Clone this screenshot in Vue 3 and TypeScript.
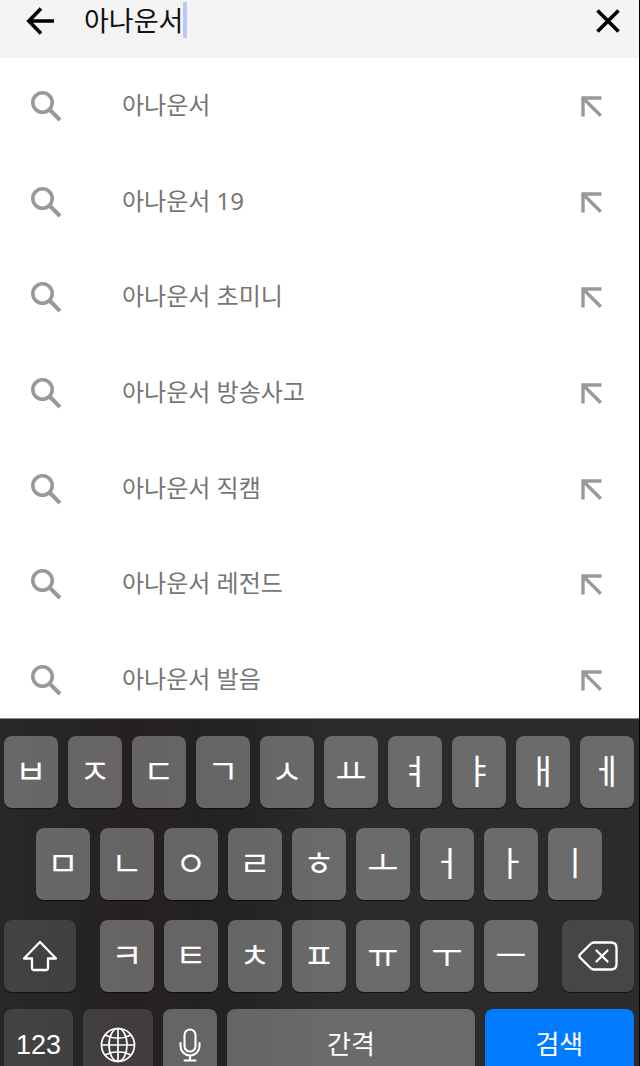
<script setup lang="ts">
import { ref } from 'vue'

const query = ref('아나운서')

const suggestions: string[] = [
  '아나운서',
  '아나운서 19',
  '아나운서 초미니',
  '아나운서 방송사고',
  '아나운서 직캠',
  '아나운서 레전드',
  '아나운서 발음',
]

const topRow: string[] = ['ㅂ', 'ㅈ', 'ㄷ', 'ㄱ', 'ㅅ', 'ㅛ', 'ㅕ', 'ㅑ', 'ㅐ', 'ㅔ']
const homeRow: string[] = ['ㅁ', 'ㄴ', 'ㅇ', 'ㄹ', 'ㅎ', 'ㅗ', 'ㅓ', 'ㅏ', 'ㅣ']
const bottomRow: string[] = ['ㅋ', 'ㅌ', 'ㅊ', 'ㅍ', 'ㅠ', 'ㅜ', 'ㅡ']
</script>

<template>
  <div class="screen">
    <header class="search-bar">
      <button class="icon-button" type="button" aria-label="뒤로">
        <svg width="28" height="28" viewBox="0 0 28 28" fill="none" stroke="#000" stroke-width="3.6">
          <path d="M28 14H3.5M15 1.5L2.8 14L15 26.5" />
        </svg>
      </button>
      <div class="field">
        <input v-model="query" class="query" type="text" size="8" aria-label="검색" />
        <span class="caret"></span>
      </div>
      <button class="icon-button" type="button" aria-label="지우기">
        <svg width="24" height="24" viewBox="0 0 24 24" fill="none" stroke="#000" stroke-width="3.6">
          <path d="M1.5 1.5L22.5 22.5M22.5 1.5L1.5 22.5" />
        </svg>
      </button>
    </header>

    <main class="results">
      <ul class="suggestions">
        <li v-for="item in suggestions" :key="item" class="suggestion">
          <svg width="32" height="32" viewBox="0 0 32 32" fill="none" stroke="#999">
            <circle cx="12.5" cy="12.5" r="9.7" stroke-width="3.6" />
            <path d="M19.5 19.5L30 30" stroke-width="4" />
          </svg>
          <a class="label" href="#">{{ item }}</a>
          <button class="icon-button" type="button" :aria-label="item + ' 입력'">
            <svg width="22" height="22" viewBox="0 0 22 22" fill="none" stroke="#999" stroke-width="3.4">
              <path d="M21.5 3H3V21.5M3 3L20.8 20.8" />
            </svg>
          </button>
        </li>
      </ul>
    </main>

    <section class="keyboard" aria-label="키보드">
      <div class="row">
        <button v-for="k in topRow" :key="k" class="key" type="button">{{ k }}</button>
      </div>
      <div class="row home">
        <button v-for="k in homeRow" :key="k" class="key" type="button">{{ k }}</button>
      </div>
      <div class="row third">
        <button class="key dark" type="button" aria-label="Shift">
          <svg width="36" height="32" viewBox="0 0 36 32" fill="none" stroke="#fff" stroke-width="2.3" stroke-linejoin="round">
            <path d="M18 2L34 18.5H26V28Q26 30 24 30H12Q10 30 10 28V18.5H2Z" />
          </svg>
        </button>
        <div class="row letters">
          <button v-for="k in bottomRow" :key="k" class="key" type="button">{{ k }}</button>
        </div>
        <button class="key dark" type="button" aria-label="삭제">
          <svg width="40" height="30" viewBox="0 0 40 30" fill="none" stroke="#fff" stroke-width="2.3" stroke-linejoin="round" stroke-linecap="round">
            <path d="M16 1.5H33Q38.5 1.5 38.5 7V23Q38.5 28.5 33 28.5H16Q14 28.5 12.5 27L2 16.5Q.8 15 2 13.5L12.5 3Q14 1.5 16 1.5Z" />
            <path d="M18.5 9.5L29.5 20.5M29.5 9.5L18.5 20.5" />
          </svg>
        </button>
      </div>
      <div class="row functions">
        <button class="key dark numbers" type="button">123</button>
        <button class="key dark" type="button" aria-label="언어 변경">
          <svg width="36" height="36" viewBox="0 0 36 36" fill="none" stroke="#fff" stroke-width="1.7">
            <circle cx="18" cy="18" r="16.5" />
            <ellipse cx="18" cy="18" rx="9" ry="16.5" />
            <path d="M18 1.5V34.5M1.5 18H34.5M5 8Q18 14.5 31 8M5 28Q18 21.5 31 28" />
          </svg>
        </button>
        <button class="key" type="button" aria-label="음성 입력">
          <svg width="22" height="34" viewBox="0 0 22 34" fill="none" stroke="#fff" stroke-width="2.1" stroke-linecap="round">
            <rect x="5.5" y="1.5" width="11" height="22" rx="5.5" />
            <path d="M1.5 15V18A9.5 9.5 0 0 0 20.5 18V15M11 27.5V32M5.5 32.5H16.5" />
          </svg>
        </button>
        <button class="key word" type="button">간격</button>
        <button class="key word search" type="button">검색</button>
      </div>
    </section>
  </div>
</template>

<style>
body {
  margin: 0;
  background: #fff;
}
</style>

<style scoped>
* {
  box-sizing: border-box;
}

.screen {
  display: flex;
  flex-direction: column;
  height: 100vh;
  overflow: hidden;
  border-right: 1px solid #000;
  background: #fff;
  font-family: 'Noto Sans CJK KR', sans-serif;
}

button {
  margin: 0;
  padding: 0;
  border: 0;
  background: none;
  font: inherit;
  color: inherit;
}

svg {
  display: block;
}

.search-bar {
  flex: none;
  display: flex;
  align-items: center;
  height: 58px;
  padding: 0 19px 16px 26px;
  background: #f4f4f4;
}

.field {
  flex: 1;
  display: flex;
  align-items: center;
  margin-left: 30px;
}

.query {
  field-sizing: content;
  height: 40px;
  padding: 0 0 4px;
  border: 0;
  outline: 0;
  background: transparent;
  color: #111;
  font-family: 'Noto Sans CJK KR', sans-serif;
  font-size: 27px;
}

.caret {
  width: 4px;
  height: 36px;
  margin-bottom: 2px;
  border-radius: 1px;
  background: #b9c8f8;
}

.results {
  flex: 1;
  min-height: 0;
  overflow: hidden;
}

.suggestions {
  display: grid;
  grid-template-rows: repeat(7, 1fr);
  height: 670px;
  margin: 0;
  padding: 0;
  list-style: none;
}

.suggestion {
  display: flex;
  align-items: center;
  padding: 0 37px 0 30px;
}

.label {
  flex: 1;
  margin-left: 60px;
  padding-bottom: 2px;
  color: #757575;
  font-family: 'Noto Sans', 'Noto Sans CJK KR', sans-serif;
  font-size: 24px;
  line-height: 36px;
  text-decoration: none;
}

.keyboard {
  flex: none;
  height: 348px;
  overflow: hidden;
  padding: 17px 5px 0 4px;
  border-top: 1px solid #8c8c8c;
  background: linear-gradient(90deg, #28282a 0%, #252120 20%, #242322 36%, #2b2b2b 52%, #2b2b2b 100%);
}

.row {
  display: flex;
  gap: 10px;
  margin-bottom: 20px;
}

.home {
  padding: 0 32px;
}

.third {
  gap: 24px;
  margin-bottom: 17px;
}

.third > .key {
  flex: 0 0 72px;
  padding: 0;
}

.letters {
  flex: 1;
  margin-bottom: 0;
}

.functions {
  display: grid;
  grid-template-columns: 69fr 70fr 54fr 247fr 149fr;
  margin-bottom: 0;
}

.key {
  flex: 1 1 0;
  display: flex;
  align-items: center;
  justify-content: center;
  min-width: 0;
  height: 72px;
  padding-bottom: 4px;
  border-radius: 8px;
  background: rgba(255, 255, 255, 0.3);
  box-shadow: 0 1px 1px rgba(0, 0, 0, 0.6);
  color: #fff;
  font-size: 34px;
  font-weight: 400;
  line-height: 48px;
}

.functions > .key {
  padding: 0;
}

.functions > .word {
  padding-bottom: 4px;
}

.dark {
  background: rgba(255, 255, 255, 0.13);
}

.numbers {
  font-family: 'Liberation Sans', Arial, sans-serif;
  font-size: 27px;
}

.word {
  font-size: 26px;
}

.search {
  background: #007aff;
}
</style>
